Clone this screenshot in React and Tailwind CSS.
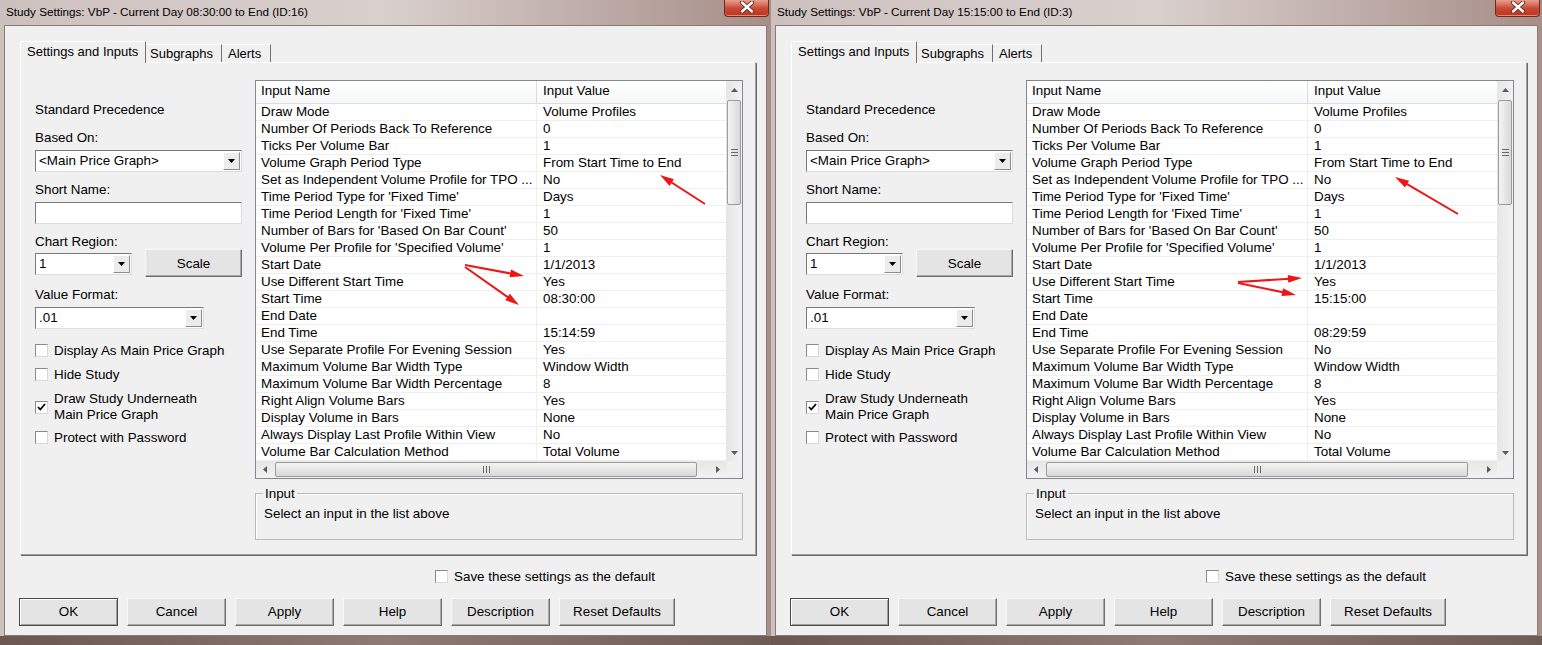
import React from "react";

const baseRows = [
  ["Draw Mode", "Volume Profiles"],
  ["Number Of Periods Back To Reference", "0"],
  ["Ticks Per Volume Bar", "1"],
  ["Volume Graph Period Type", "From Start Time to End"],
  ["Set as Independent Volume Profile for TPO ...", "No"],
  ["Time Period Type for 'Fixed Time'", "Days"],
  ["Time Period Length for 'Fixed Time'", "1"],
  ["Number of Bars for 'Based On Bar Count'", "50"],
  ["Volume Per Profile for 'Specified Volume'", "1"],
  ["Start Date", "1/1/2013"],
  ["Use Different Start Time", "Yes"],
  ["Start Time", "START"],
  ["End Date", ""],
  ["End Time", "END"],
  ["Use Separate Profile For Evening Session", "SEP"],
  ["Maximum Volume Bar Width Type", "Window Width"],
  ["Maximum Volume Bar Width Percentage", "8"],
  ["Right Align Volume Bars", "Yes"],
  ["Display Volume in Bars", "None"],
  ["Always Display Last Profile Within View", "No"],
  ["Volume Bar Calculation Method", "Total Volume"],
];

function Tri({ dir = "down", color = "#000", w = 7, h = 4 }) {
  let pts;
  if (dir === "down") pts = `0,0 ${w},0 ${w / 2},${h}`;
  else if (dir === "up") pts = `0,${h} ${w},${h} ${w / 2},0`;
  else if (dir === "left") pts = `${h},0 ${h},${w} 0,${w / 2}`;
  else pts = `0,0 0,${w} ${h},${w / 2}`;
  const vw = dir === "down" || dir === "up" ? w : h;
  const vh = dir === "down" || dir === "up" ? h : w;
  return (
    <svg width={vw} height={vh} viewBox={`0 0 ${vw} ${vh}`}>
      <polygon points={pts} fill={color} />
    </svg>
  );
}

function Select({ text, w }) {
  return (
    <div
      className={`flex h-[22px] ${w} border border-t-[#7a7a7a] border-l-[#7a7a7a] border-r-[#dcdcdc] border-b-[#dcdcdc] bg-white`}
    >
      <span className="flex-1 pl-[3px] leading-[20px] whitespace-nowrap overflow-hidden">{text}</span>
      <span className="m-[1px] w-[17px] flex items-center justify-center bg-[#ececec] border border-t-white border-l-white border-r-[#8c8c8c] border-b-[#8c8c8c]">
        <Tri dir="down" w={7} h={4} />
      </span>
    </div>
  );
}

function CheckBox({ checked }) {
  return (
    <span className="w-[13px] h-[13px] shrink-0 flex items-center justify-center bg-white border border-t-[#8a8a8a] border-l-[#8a8a8a] border-r-[#d8d8d8] border-b-[#d8d8d8]">
      {checked && (
        <svg width="9" height="8" viewBox="0 0 9 8">
          <path d="M1 4 L3.3 6.5 L8 1" fill="none" stroke="#000" strokeWidth="1.8" />
        </svg>
      )}
    </span>
  );
}

function Btn({ children, w = "w-[99px]", def }) {
  return (
    <div
      className={`flex items-center justify-center h-[28px] ${w} bg-[#e4e4e4] border ${
        def
          ? "border-[#4a4a4a] shadow-[inset_1px_1px_0_#ffffff,inset_-1px_-1px_0_#a0a0a0]"
          : "border-t-[#f8f8f8] border-l-[#f8f8f8] border-r-[#6e6e6e] border-b-[#6e6e6e] shadow-[inset_-1px_-1px_0_#a8a8a8]"
      }`}
    >
      {children}
    </div>
  );
}

function Arrow({ a }) {
  const [x1, y1, x2, y2] = a;
  const dx = x2 - x1;
  const dy = y2 - y1;
  const len = Math.hypot(dx, dy);
  const ux = dx / len;
  const uy = dy / len;
  const hl = 14;
  const hw = 4;
  const bx = x2 - ux * hl;
  const by = y2 - uy * hl;
  const pts = `${x2},${y2} ${bx - uy * hw},${by + ux * hw} ${bx + uy * hw},${by - ux * hw}`;
  return (
    <g>
      <line x1={x1} y1={y1} x2={bx + ux * 2} y2={by + uy * 2} stroke="#ee1515" strokeWidth="2" />
      <polygon points={pts} fill="#ee1515" />
    </g>
  );
}

function ScrollThumbGrip({ vertical }) {
  return vertical ? (
    <div className="flex flex-col gap-[2px] items-center">
      <span className="block w-[7px] h-[1px] bg-[#6a6a6a]" />
      <span className="block w-[7px] h-[1px] bg-[#6a6a6a]" />
      <span className="block w-[7px] h-[1px] bg-[#6a6a6a]" />
    </div>
  ) : (
    <div className="flex gap-[2px] items-center">
      <span className="block w-[1px] h-[7px] bg-[#6a6a6a]" />
      <span className="block w-[1px] h-[7px] bg-[#6a6a6a]" />
      <span className="block w-[1px] h-[7px] bg-[#6a6a6a]" />
    </div>
  );
}

function Dialog({ title, start, end, sep, arrows }) {
  const rows = baseRows.map(([n, v]) => [
    n,
    v === "START" ? start : v === "END" ? end : v === "SEP" ? sep : v,
  ]);
  return (
    <div className="relative w-[771px] h-[645px] shrink-0 flex flex-col bg-linear-to-r from-[#cdc1be] via-[#d9d0ce] to-[#a78e88]">
      {/* title bar */}
      <div className="h-[25px] flex items-start justify-between">
        <span className="pl-[6px] pt-[4px] text-[11.7px] leading-[15px] text-black whitespace-nowrap">{title}</span>
        <div className="mr-[2px] w-[45px] h-[17px] flex items-center justify-center rounded-b-[4px] border border-t-0 border-[#6e2a1e] bg-linear-to-b from-[#e7a08f] via-[#cb4b35] to-[#b9341f] shadow-[inset_0_-1px_0_#e88a74]">
          <svg width="16" height="12" viewBox="0 0 16 12" className="-mt-[3px]">
            <path d="M3 1.5 L13 10.5 M13 1.5 L3 10.5" stroke="#5a2a22" strokeWidth="4.2" strokeLinecap="round" />
            <path d="M3 1.5 L13 10.5 M13 1.5 L3 10.5" stroke="#ffffff" strokeWidth="2.4" strokeLinecap="round" />
          </svg>
        </div>
      </div>

      {/* client area */}
      <div className="mx-[4px] h-[611px] flex flex-col bg-[#f0f0f0] border border-[#8a7a76] pl-[15px] pt-[15px]">
        {/* tabs */}
        <div className="flex items-end h-[21px] text-[13px]">
          <div className="relative z-10 h-[22px] -mb-[1px] w-[126px] pl-[6px] pt-[2px] bg-[#f0f0f0] border-t border-l border-t-white border-l-white border-r border-r-[#707070] leading-[15px] whitespace-nowrap">
            Settings and Inputs
          </div>
          <div className="h-[18px] w-[76px] pl-[4px] pt-[1px] border-t border-t-white border-r border-r-[#707070] leading-[15px] whitespace-nowrap">
            Subgraphs
          </div>
          <div className="h-[18px] w-[49px] pl-[6px] pt-[1px] border-t border-t-white border-r border-r-[#707070] leading-[15px] whitespace-nowrap">
            Alerts
          </div>
        </div>

        {/* tab panel */}
        <div className="w-[736px] h-[493px] flex border border-t-white border-l-white border-r-[#a0a0a0] border-b-[#a0a0a0] shadow-[1px_1px_0_#696969]">
          {/* left column */}
          <div className="w-[234px] pl-[14px] flex flex-col leading-[15px]">
            <div className="mt-[39px]">Standard Precedence</div>
            <div className="mt-[13px]">Based On:</div>
            <div className="mt-[5px]">
              <Select text="<Main Price Graph>" w="w-[207px]" />
            </div>
            <div className="mt-[10px]">Short Name:</div>
            <div className="mt-[5px] w-[207px] h-[22px] bg-white border border-t-[#7a7a7a] border-l-[#7a7a7a] border-r-[#dcdcdc] border-b-[#dcdcdc]" />
            <div className="mt-[10px]">Chart Region:</div>
            <div className="flex items-start">
              <div className="mt-[4px]">
                <Select text="1" w="w-[97px]" />
              </div>
              <div className="ml-[13px]">
                <Btn w="w-[97px]">Scale</Btn>
              </div>
            </div>
            <div className="mt-[10px]">Value Format:</div>
            <div className="mt-[5px]">
              <Select text=".01" w="w-[169px]" />
            </div>
            <div className="mt-[14px] flex items-center gap-[6px]">
              <CheckBox />
              <span>Display As Main Price Graph</span>
            </div>
            <div className="mt-[9px] flex items-center gap-[6px]">
              <CheckBox />
              <span>Hide Study</span>
            </div>
            <div className="mt-[9px] flex items-center gap-[6px]">
              <CheckBox checked />
              <span className="leading-[16px]">
                Draw Study Underneath
                <br />
                Main Price Graph
              </span>
            </div>
            <div className="mt-[7px] flex items-center gap-[6px]">
              <CheckBox />
              <span>Protect with Password</span>
            </div>
          </div>

          {/* right column */}
          <div className="pt-[17px] flex flex-col">
            <div className="w-[488px] h-[399px] flex flex-col border border-[#828790] bg-white">
              <div className="flex h-[380px]">
                <div className="w-[470px] flex flex-col">
                  <div className="flex h-[23px] border-b border-[#dcdcdc] bg-linear-to-b from-white to-[#f6f7f8]">
                    <div className="w-[281px] pl-[5px] leading-[20px] border-r border-[#dcdcdc]">Input Name</div>
                    <div className="flex-1 pl-[6px] leading-[20px]">Input Value</div>
                  </div>
                  {rows.map(([n, v], i) => (
                    <div key={i} className="flex h-[17px] border-b border-[#efefef]">
                      <div className="w-[281px] pl-[5px] leading-[16px] border-r border-[#efefef] whitespace-nowrap overflow-hidden">
                        {n}
                      </div>
                      <div className="flex-1 pl-[6px] leading-[16px] whitespace-nowrap overflow-hidden">{v}</div>
                    </div>
                  ))}
                </div>
                {/* vertical scrollbar */}
                <div className="w-[16px] flex flex-col bg-linear-to-r from-[#e6e6e6] to-[#f2f2f2]">
                  <div className="h-[17px] flex items-center justify-center">
                    <Tri dir="up" color="#5a5a5a" w={7} h={4} />
                  </div>
                  <div className="flex-1 flex flex-col">
                    <div className="mt-[2px] mx-[1px] h-[105px] rounded-[2px] border border-[#9b9b9b] bg-linear-to-r from-[#f4f4f4] to-[#d9d9d9] flex items-center justify-center">
                      <ScrollThumbGrip vertical />
                    </div>
                  </div>
                  <div className="h-[17px] flex items-center justify-center">
                    <Tri dir="down" color="#5a5a5a" w={7} h={4} />
                  </div>
                </div>
              </div>
              {/* horizontal scrollbar */}
              <div className="flex h-[17px]">
                <div className="w-[470px] flex bg-linear-to-b from-[#e6e6e6] to-[#f2f2f2]">
                  <div className="w-[17px] flex items-center justify-center">
                    <Tri dir="left" color="#5a5a5a" w={7} h={4} />
                  </div>
                  <div className="flex-1 flex items-center">
                    <div className="ml-[2px] w-[422px] h-[15px] rounded-[2px] border border-[#9b9b9b] bg-linear-to-b from-[#f4f4f4] to-[#d9d9d9] flex items-center justify-center">
                      <ScrollThumbGrip />
                    </div>
                  </div>
                  <div className="w-[17px] flex items-center justify-center">
                    <Tri dir="right" color="#5a5a5a" w={7} h={4} />
                  </div>
                </div>
                <div className="flex-1 bg-[#f0f0f0]" />
              </div>
            </div>

            {/* group box */}
            <div className="relative mt-[14px] w-[488px] h-[47px] border border-[#b9b9b9] shadow-[inset_1px_1px_0_#ffffff]">
              <span className="absolute -top-[8px] left-[7px] px-[2px] bg-[#f0f0f0] leading-[15px]">Input</span>
              <div className="pl-[8px] pt-[12px] leading-[15px]">Select an input in the list above</div>
            </div>
          </div>
        </div>

        {/* save default */}
        <div className="mt-[14px] pl-[415px] flex items-center gap-[6px] leading-[15px]">
          <CheckBox />
          <span>Save these settings as the default</span>
        </div>

        {/* buttons */}
        <div className="mt-[14px] -ml-[1px] flex gap-[9px]">
          <Btn def>OK</Btn>
          <Btn>Cancel</Btn>
          <Btn>Apply</Btn>
          <Btn>Help</Btn>
          <Btn>Description</Btn>
          <Btn w="w-[116px]">Reset Defaults</Btn>
        </div>
      </div>
      <div className="flex-1 bg-linear-to-r from-[#6b5853] via-[#8f7a75] to-[#6e5c57]" />

      {/* red annotation arrows (overlay) */}
      <svg className="absolute inset-0 pointer-events-none" width="771" height="645" viewBox="0 0 771 645">
        {arrows.map((a, i) => (
          <Arrow key={i} a={a} />
        ))}
      </svg>
    </div>
  );
}

export default function App() {
  return (
    <div className="w-[1542px] h-[645px] flex overflow-hidden font-['Liberation_Sans',Arial,sans-serif] text-[13.4px] text-black">
      <Dialog
        title="Study Settings: VbP - Current Day 08:30:00 to End (ID:16)"
        start="08:30:00"
        end="15:14:59"
        sep="Yes"
        arrows={[
          [705, 204, 660, 175],
          [465, 265, 524, 276],
          [465, 267, 519, 305],
        ]}
      />
      <Dialog
        title="Study Settings: VbP - Current Day 15:15:00 to End (ID:3)"
        start="15:15:00"
        end="08:29:59"
        sep="No"
        arrows={[
          [687, 214, 624, 177],
          [467, 282, 531, 278],
          [467, 283, 525, 295],
        ]}
      />
    </div>
  );
}
